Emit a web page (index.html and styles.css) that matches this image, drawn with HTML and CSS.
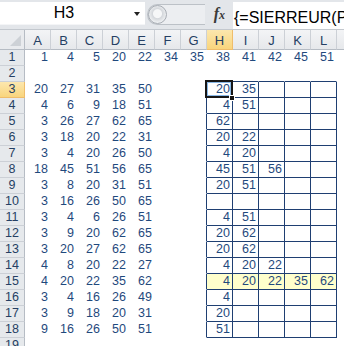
FILE: index.html
```html
<!DOCTYPE html>
<html lang="fr">
<head>
  <meta charset="UTF-8" />
  <title>SIERREUR</title>
  <link rel="stylesheet" href="styles.css">
</head>
<body>
  <div class="formula-bar">
    <div class="name-box">
      <span class="ref">H3</span>
      <span class="drop"></span>
    </div>
    <div class="tools">
      <span class="pill"><span class="knob"></span></span>
      <span class="fx">f<i>x</i></span>
    </div>
    <div class="formula">{=SIERREUR(PETITE.VALEUR(SI(NB.SI($A3:$E3;A$1:L$1);A$1:L$1);COLONNE()-7);"")}</div>
  </div>

  <div class="sheet" id="sheet"></div>

  <script>
    const sheet = document.getElementById("sheet");
    const cols = "ABCDEFGHIJKLM".split("");
    const row1 = [1, 4, 5, 20, 22, 34, 35, 38, 41, 42, 45, 51];
    const draws = [
      [20, 27, 31, 35, 50], [4, 6, 9, 18, 51], [3, 26, 27, 62, 65], [3, 18, 20, 22, 31],
      [3, 4, 20, 26, 50], [18, 45, 51, 56, 65], [3, 8, 20, 31, 51], [3, 16, 26, 50, 65],
      [3, 4, 6, 26, 51], [3, 9, 20, 62, 65], [3, 20, 27, 62, 65], [4, 8, 20, 22, 27],
      [4, 20, 22, 35, 62], [3, 4, 16, 26, 49], [3, 9, 18, 20, 31], [9, 16, 26, 50, 51]
    ];
    const found = [
      [20, 35], [4, 51], [62], [20, 22], [4, 20], [45, 51, 56], [20, 51], [],
      [4, 51], [20, 62], [20, 62], [4, 20, 22], [4, 20, 22, 35, 62], [4], [20], [51]
    ];

    function add(cls, text) {
      const el = document.createElement("div");
      el.className = cls;
      if (text !== undefined) el.textContent = text;
      sheet.appendChild(el);
    }

    // header row
    add("corner");
    cols.forEach((c, i) => add(i === 7 ? "col-head on" : "col-head", c));

    for (let r = 1; r <= 19; r++) {
      add(r === 3 ? "row-head on" : "row-head", r);
      const inBox = r >= 3 && r <= 18;
      for (let c = 0; c < cols.length; c++) {
        let cls = "cell";
        let val;
        if (r === 1) val = row1[c];
        if (inBox && c < 5) val = draws[r - 3][c];
        if (inBox && c >= 7 && c <= 11) {
          val = found[r - 3][c - 7];
          cls += " box";
          if (r === 15) cls += " hit";
          if (r === 3 && c === 7) cls += " active";
        }
        if (inBox && c === 6) cls += " box-left";
        if (r === 2 && c >= 7 && c <= 11) cls += " box-top";
        add(cls, val);
      }
    }
  </script>
</body>
</html>
```

FILE: styles.css
```css
body {
  margin: 0;
  width: 344px;
  height: 346px;
  overflow: hidden;
  background: #fff;
  font-family: "Liberation Sans", Arial, sans-serif;
}

/* formula bar */
.formula-bar {
  display: flex;
  height: 29px;
  background: #e3e6ea;
  border-bottom: 1px solid #c3c8ce;
  overflow: hidden;
}
.name-box {
  display: flex;
  align-items: center;
  width: 145px;
  height: 22px;
  margin-top: 2px;
  background: #fff;
  border-bottom: 1px solid #f4f5f7;
}
.ref {
  width: 128px;
  text-align: center;
  font-size: 16px;
  color: #000;
}
.drop {
  width: 0;
  height: 0;
  margin: 2px 0 0 6px;
  border-left: 3.5px solid transparent;
  border-right: 3.5px solid transparent;
  border-top: 4px solid #222;
}
.tools {
  display: flex;
  align-items: center;
  width: 88px;
}
.pill {
  display: flex;
  align-items: center;
  width: 58px;
  height: 21px;
  margin-left: 2px;
  box-sizing: border-box;
  border: 1px solid #bcc1c7;
  border-right: none;
  border-radius: 11px 0 0 11px;
  background: #eceef1;
}
.knob {
  width: 19px;
  height: 19px;
  box-sizing: border-box;
  border-radius: 50%;
  border: 1px solid #a7acb3;
  background: radial-gradient(circle at 50% 45%, #f6f7f8 0, #f6f7f8 4px, #d5d8dc 5px, #eef0f2 9px);
}
.fx {
  margin-left: auto;
  margin-right: 8px;
  margin-top: -2px;
  font-family: "Liberation Serif", serif;
  font-style: italic;
  font-weight: bold;
  font-size: 16px;
  color: #3a3a3a;
}
.fx i {
  font-size: 12px;
}
.formula {
  flex: 1;
  height: 27px;
  margin-top: 2px;
  padding: 7px 0 0 1px;
  box-sizing: border-box;
  background: #fff;
  font-size: 16px;
  line-height: 17px;
  color: #000;
  white-space: nowrap;
  overflow: hidden;
}

/* grid */
.sheet {
  display: grid;
  grid-template-columns: 25px repeat(13, 26px);
  grid-template-rows: 20px;
  grid-auto-rows: 16px;
  font-size: 12.5px;
}
.sheet > div {
  box-sizing: border-box;
  white-space: nowrap;
  overflow: hidden;
}
.corner {
  position: relative;
  background: #e9ebee;
  border-right: 1px solid #b6bcc4;
  border-bottom: 1px solid #b6bcc4;
}
.corner::after {
  content: "";
  position: absolute;
  right: 3px;
  bottom: 3px;
  border-left: 11px solid transparent;
  border-bottom: 11px solid #cdd1d6;
}
.col-head {
  padding-top: 2px;
  line-height: 17px;
  text-align: center;
  font-size: 13px;
  color: #253f63;
  background: linear-gradient(#f3f4f6, #e6e8eb);
  border-right: 1px solid #ccd0d6;
  border-bottom: 1px solid #b6bcc4;
}
.row-head {
  line-height: 15px;
  text-align: center;
  color: #253f63;
  background: #e6e9ec;
  border-right: 1px solid #b6bcc4;
  border-bottom: 1px solid #ccd0d6;
}
.col-head.on,
.row-head.on {
  background: linear-gradient(#fce7ae, #f9d57d);
  border-right-color: #efbd6b;
  border-bottom-color: #efbd6b;
}
.cell {
  padding-right: 2px;
  line-height: 15px;
  text-align: right;
  color: #1f497d;
  border-right: 1px solid transparent;
  border-bottom: 1px solid transparent;
}
.cell.box {
  border-right-color: #1f3f72;
  border-bottom-color: #1f3f72;
}
.cell.box-left {
  border-right-color: #1f3f72;
}
.cell.box-top {
  border-bottom-color: #1f3f72;
}
.cell.hit {
  background: #ffffcc;
}
.cell.active {
  position: relative;
  overflow: visible;
}
.cell.active::before {
  content: "";
  position: absolute;
  left: -2px;
  top: -2px;
  right: -1px;
  bottom: -1px;
  border: 2px solid #161616;
  box-shadow: inset 0 0 0 1px #8ab8e6;
}
.cell.active::after {
  content: "";
  position: absolute;
  right: -3px;
  bottom: -4px;
  width: 4px;
  height: 4px;
  background: #161616;
  border: 1px solid #fff;
}
```
